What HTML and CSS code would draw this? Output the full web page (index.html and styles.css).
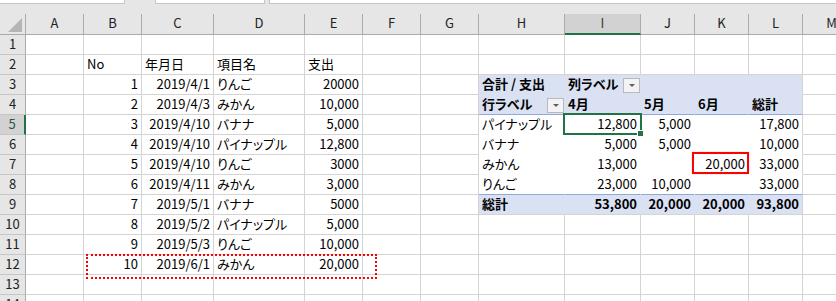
FILE: index.html
```html
<!DOCTYPE html>
<html lang="ja">
<head>
  <meta charset="UTF-8" />
  <title>ピボットテーブル</title>
  <link rel="stylesheet" href="styles.css">
</head>
<body>
  <div class="app">
    <div class="topbar">
      <div class="box name-box"></div>
      <div class="box fx-box"></div>
      <div class="box formula-box"></div>
    </div>

    <div class="sheet" id="sheet"></div>

    <!-- selection and hand-drawn marks sit over the grid -->
    <div class="selection"></div>
    <div class="fill-handle"></div>
    <div class="mark-box"></div>
    <div class="mark-dotted"></div>
  </div>

  <script>
    const COLS = ['A', 'B', 'C', 'D', 'E', 'F', 'G', 'H', 'I', 'J', 'K', 'L', 'M'];
    const ROW_COUNT = 14;
    const cells = {};

    const set = (ref, text, opts = {}) => { cells[ref] = { text, ...opts }; };

    const records = [
      [1, '2019/4/1', 'りんご', '20000'],
      [2, '2019/4/3', 'みかん', '10,000'],
      [3, '2019/4/10', 'バナナ', '5,000'],
      [4, '2019/4/10', 'パイナップル', '12,800'],
      [5, '2019/4/10', 'りんご', '3000'],
      [6, '2019/4/11', 'みかん', '3,000'],
      [7, '2019/5/1', 'バナナ', '5000'],
      [8, '2019/5/2', 'パイナップル', '5,000'],
      [9, '2019/5/3', 'りんご', '10,000'],
      [10, '2019/6/1', 'みかん', '20,000']
    ];

    set('B2', 'No');
    set('C2', '年月日');
    set('D2', '項目名');
    set('E2', '支出');
    records.forEach((r, i) => {
      const row = i + 3;
      set('B' + row, r[0], { right: true });
      set('C' + row, r[1], { right: true });
      set('D' + row, r[2]);
      set('E' + row, r[3], { right: true });
    });

    // pivot table H3:L9
    set('H3', '合計 / 支出', { bold: true });
    set('I3', '列ラベル', { bold: true, dropdown: true });
    set('H4', '行ラベル', { bold: true, dropdown: true });
    ['4月', '5月', '6月', '総計'].forEach((t, i) => set(COLS[8 + i] + '4', t, { bold: true }));

    const pivot = [
      ['パイナップル', '12,800', '5,000', '', '17,800'],
      ['バナナ', '5,000', '5,000', '', '10,000'],
      ['みかん', '13,000', '', '20,000', '33,000'],
      ['りんご', '23,000', '10,000', '', '33,000'],
      ['総計', '53,800', '20,000', '20,000', '93,800']
    ];
    pivot.forEach((line, i) => {
      const row = i + 5;
      const bold = row === 9;
      line.forEach((t, j) => set(COLS[7 + j] + row, t, { right: j > 0, bold }));
    });

    const sheet = document.getElementById('sheet');

    function add(cls, text = '') {
      const div = document.createElement('div');
      div.className = cls;
      div.textContent = text;
      sheet.appendChild(div);
      return div;
    }

    // column headers
    const corner = add('cell corner');
    corner.innerHTML = '<svg width="14" height="14" viewBox="0 0 14 14"><polygon points="14,0 14,14 0,14" fill="#b5b5b5"/></svg>';
    COLS.forEach(c => add('cell col-head' + (c === 'I' ? ' sel' : ''), c));

    for (let row = 1; row <= ROW_COUNT; row++) {
      add('cell row-head' + (row === 5 ? ' sel' : ''), row);
      COLS.forEach((c, ci) => {
        const info = cells[c + row] || { text: '' };
        let cls = 'cell';
        if (info.right) cls += ' right';
        if (info.bold) cls += ' bold';

        const inPivot = ci >= 7 && ci <= 11 && row >= 3 && row <= 9;
        if (inPivot) {
          cls += ' pv';
          if (row <= 4 || row === 9) cls += ' pv-blue';
          if (row === 4 || row === 8) cls += ' pv-rule';
          if (row === 3 || (row >= 5 && row <= 7)) cls += ' pv-open-b';
          if (c !== 'L') cls += ' pv-open-r';
        }

        const div = add(cls);
        if (info.dropdown) {
          div.classList.add('has-dd');
          div.innerHTML = `<span>${info.text}</span><span class="dd"><svg width="6" height="3" viewBox="0 0 6 3"><polygon points="0,0 6,0 3,3" fill="#5f5f5f"/></svg></span>`;
        } else {
          div.textContent = info.text;
        }
      });
    }
  </script>
</body>
</html>
```

FILE: styles.css
```css
:root {
  --grid: #d4d4d4;
  --head-bg: #e6e6e6;
  --head-line: #ababab;
  --sel-bg: #d2d2d2;
  --excel-green: #217346;
  --pivot-blue: #d9e1f2;
  --pivot-line: #8ea9db;
}

* {
  box-sizing: border-box;
}

body {
  margin: 0;
  background: #fff;
  font-family: "Noto Sans CJK JP", "Noto Sans", sans-serif;
  font-size: 13px;
  font-feature-settings: "palt";
  color: #000;
  overflow: hidden;
}

.app {
  position: relative;
  width: 836px;
  height: 301px;
  overflow: hidden;
  background: var(--head-bg);
}

.topbar {
  display: flex;
  height: 14px;
}

.box {
  height: 4px;
  background: #fff;
  border: 1px solid #c6c6c6;
  border-top: none;
}

.name-box {
  width: 125px;
  border-left: none;
}

.fx-box {
  width: 110px;
  margin-left: 30px;
}

.formula-box {
  flex: 1;
  margin-left: 4px;
  margin-right: -2px;
}

.sheet {
  display: grid;
  grid-template-columns: 26px 58px 58px 72px 91px 58px 58px 58px 86px 76px 54px 54px 54px 58px;
  grid-template-rows: 21px repeat(14, 20px);
  background: #fff;
}

.cell {
  display: flex;
  align-items: flex-end;
  padding: 0 3px 2px;
  line-height: 17px;
  white-space: nowrap;
  overflow: hidden;
  border-right: 1px solid var(--grid);
  border-bottom: 1px solid var(--grid);
}

.right {
  justify-content: flex-end;
}

.bold {
  font-weight: 700;
}

.corner {
  background: var(--head-bg);
  border-right-color: var(--head-line);
  border-bottom-color: var(--head-line);
  justify-content: flex-end;
  padding: 0 3px 2px 0;
}

.corner svg {
  display: block;
}

.col-head {
  background: var(--head-bg);
  border-right-color: var(--head-line);
  border-bottom-color: var(--head-line);
  justify-content: center;
  align-items: flex-start;
  padding: 0;
  color: #222;
}

.col-head.sel {
  background: var(--sel-bg);
  border-bottom: 2px solid var(--excel-green);
  color: #3c3c3c;
}

.row-head {
  background: var(--head-bg);
  border-right-color: var(--head-line);
  border-bottom-color: #c6c6c6;
  justify-content: center;
  padding: 0 0 2px;
  color: #222;
}

.row-head.sel {
  background: var(--sel-bg);
  border-right: 2px solid var(--excel-green);
  color: #2d5a40;
}

/* pivot table */
.pv {
  background: #fff;
}

.pv-blue {
  background: var(--pivot-blue);
}

.pv-open-r {
  border-right-color: transparent;
}

.pv-open-b {
  border-bottom-color: transparent;
}

.pv-rule {
  border-bottom-color: var(--pivot-line);
}

.has-dd {
  justify-content: space-between;
}

.dd {
  display: flex;
  align-items: center;
  justify-content: center;
  width: 17px;
  height: 15px;
  margin: 0 -3px -1px 0;
  background: #f3f3f3;
  border: 1px solid #b9b9b9;
}

.dd svg {
  display: block;
}

/* overlays */
.selection {
  position: absolute;
  left: 563px;
  top: 113px;
  width: 79px;
  height: 22px;
  border: 2px solid var(--excel-green);
}

.fill-handle {
  position: absolute;
  left: 637px;
  top: 130px;
  width: 7px;
  height: 7px;
  background: var(--excel-green);
  border: 1px solid #fff;
}

.mark-box {
  position: absolute;
  left: 692px;
  top: 152px;
  width: 57px;
  height: 22px;
  border: 2px solid #f00;
  box-shadow: 0 0 1px rgba(255, 0, 0, 0.4);
}

.mark-dotted {
  position: absolute;
  left: 86px;
  top: 254px;
  width: 291px;
  height: 25px;
  border: 2px dotted #f00;
}
```
